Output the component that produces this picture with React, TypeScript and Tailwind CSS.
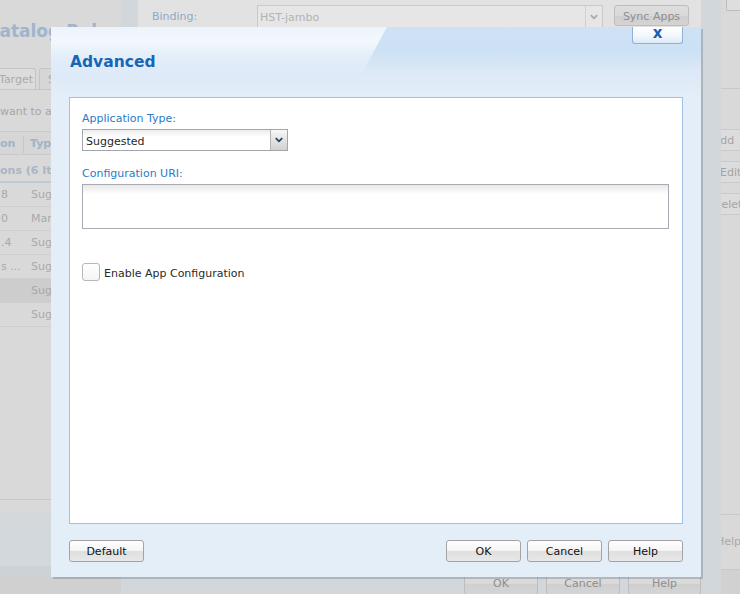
import React from 'react';

const font = "font-['DejaVu_Sans',Verdana,sans-serif]";

const btn =
  'flex items-center justify-center rounded-[3px] border border-[#a3a3a3] bg-[linear-gradient(180deg,#ffffff_0%,#f4f4f4_50%,#dfdfdf_52%,#e8e8e8_100%)] pt-[3px] text-[11px] text-[#111]';

const bgBtn =
  'flex items-center justify-center rounded-[3px] border border-[#bdbdbd] bg-[linear-gradient(180deg,#dedede_0%,#d9d9d9_50%,#cfcfcf_52%,#d4d4d4_100%)] text-[11px] text-[#8e8e8e]';

const rows = [
  { a: '8', b: 'Suggested' },
  { a: '0', b: 'Manual' },
  { a: '.4', b: 'Suggested' },
  { a: 's ...', b: 'Suggested' },
  { a: '', b: 'Suggested', selected: true },
  { a: '', b: 'Suggested' },
];

function Chevron({ className }: { className?: string }) {
  return (
    <svg viewBox="0 0 10 7" className={className}>
      <path d="M1 1.2 L5 5.2 L9 1.2" fill="none" stroke="currentColor" strokeWidth="2.2" />
    </svg>
  );
}

export default function App() {
  return (
    <div className={`relative h-[594px] w-[740px] overflow-hidden bg-[#d2d7dc] ${font}`}>
      <div className="flex h-full">
        {/* left catalog panel (dimmed) */}
        <div className="flex h-full w-[121px] shrink-0 flex-col overflow-hidden bg-[#d9d9d9]">
          <div className="h-[20px]" />
          <div className="-ml-[13px] whitespace-nowrap text-[17px] font-bold leading-[22px] text-[#9fb5cc]">
            Catalog Rules
          </div>
          <div className="mt-[27px] flex h-[21px] items-end gap-[3px] border-b border-[#c6c6c6]">
            <div className="-ml-[4px] flex h-[21px] w-[40px] items-center justify-center rounded-t-[3px] border border-b-0 border-[#c4c4c4] bg-[#dcdcdc] pt-[2px] text-[11px] text-[#ababab]">
              Target
            </div>
            <div className="flex h-[21px] w-[60px] items-center rounded-t-[3px] border border-b-0 border-[#c4c4c4] bg-[#d6d6d6] pl-[8px] pt-[2px] text-[11px] text-[#ababab]">
              Source
            </div>
          </div>
          <div className="mt-[15px] whitespace-nowrap text-[11px] leading-[14px] text-[#a6a6a6]">
            want to add rules
          </div>
          <div className="mt-[12px] flex h-[24px] items-center border-y border-[#cacaca] bg-[#d6d6d6] pt-[3px] text-[11px] font-bold text-[#9fb3c8]">
            <div className="w-[24px] border-r border-[#c6c6c6]">on</div>
            <div className="pl-[6px]">Type</div>
          </div>
          <div className="flex h-[28px] shrink-0 items-center border-b-2 border-[#bccad8] pt-[6px] whitespace-nowrap text-[11px] font-bold text-[#a8b6c5]">
            ons (6 Items)
          </div>
          {rows.map((r, i) => (
            <div
              key={i}
              className={`flex h-[24px] shrink-0 items-center border-b border-[#cfcfcf] pt-[2px] text-[11px] text-[#a9a9a9] ${
                r.selected ? 'bg-[#cdcdcd]' : ''
              }`}
            >
              <div className="w-[31px] whitespace-nowrap pl-[1px]">{r.a}</div>
              <div className="whitespace-nowrap">{r.b}</div>
            </div>
          ))}
          <div className="flex-1" />
          <div className="h-[14px] border-t border-[#c8c8c8]" />
          <div className="h-[53px] bg-[#d3d8dd]" />
          <div className="h-[11px] bg-[#cdd2d7]" />
          <div className="h-[17px] bg-[#d0d0d0]" />
        </div>

        {/* main wizard area (dimmed) */}
        <div className="flex h-full w-[600px] shrink-0 flex-col pl-[17px] pr-[20px]">
          <div className="flex h-[566px] flex-col bg-[#e2e2e2]">
            <div className="flex h-[27px] items-start pt-[5px]">
              <div className="w-[119px] pl-[14px] pt-[5px] text-[11px] leading-[14px] text-[#8fa9c6]">Binding:</div>
              <div className="flex h-[23px] w-[346px] items-center border border-[#cacaca] bg-[#e6e6e6]">
                <span className="flex-1 pl-[2px] pt-[4px] text-[11px] text-[#b3b3b3]">HST-jambo</span>
                <div className="flex h-full w-[17px] items-center justify-center border-l border-[#d0d0d0] text-[#a9a9a9]">
                  <Chevron className="h-[6px] w-[8px]" />
                </div>
              </div>
              <div className={`ml-[11px] h-[21px] w-[75px] ${bgBtn} pt-[4px] text-[#6f6f6f]`}>Sync Apps</div>
            </div>
          </div>
          <div className="flex flex-1 items-end justify-end gap-[8px]">
            <div className={`h-[22px] w-[74px] ${bgBtn} translate-y-[1px]`}>OK</div>
            <div className={`h-[22px] w-[74px] ${bgBtn} translate-y-[1px]`}>Cancel</div>
            <div className={`h-[22px] w-[73px] ${bgBtn} translate-y-[1px]`}>Help</div>
          </div>
        </div>

        {/* right strip (dimmed) */}
        <div className="flex h-full w-[19px] shrink-0 flex-col overflow-hidden bg-[#d9d9d9]">
          <div className="ml-[5px] h-[11px] w-[30px] rounded-b-[2px] border border-t-0 border-[#bcbcbc] bg-[#dedede]" />
          <div className="h-[78px] border-b border-[#c9c9c9]" />
          <div className="h-[40px]" />
          <div className="flex h-[22px] items-center border-y border-[#cbcbcb] bg-[#dcdcdc] pt-[3px]">
            <span className="-ml-[8px] whitespace-nowrap text-[11px] text-[#a4a4a4]">Add</span>
          </div>
          <div className="h-[10px]" />
          <div className="flex h-[22px] items-center border-y border-[#cbcbcb] bg-[#dcdcdc] pt-[3px]">
            <span className="-ml-[1px] whitespace-nowrap text-[11px] text-[#a4a4a4]">Edit</span>
          </div>
          <div className="h-[10px]" />
          <div className="flex h-[22px] items-center border-y border-[#cbcbcb] bg-[#dcdcdc] pt-[3px]">
            <span className="-ml-[8px] whitespace-nowrap text-[11px] text-[#a4a4a4]">Delete</span>
          </div>
          <div className="flex-1" />
          <div className="flex h-[56px] items-center border-y border-[#c9c9c9]">
            <span className="-ml-[5px] whitespace-nowrap text-[11px] text-[#a9a9a9]">Help</span>
          </div>
          <div className="h-[24px] bg-[#d1d1d1]" />
        </div>
      </div>

      {/* Advanced dialog */}
      <div className="absolute left-[51px] top-[27px] flex h-[550px] w-[650px] flex-col bg-[#e4eef9] shadow-[2px_2px_0_rgba(80,90,100,0.28)]">
        <div className="relative h-[70px] shrink-0 bg-[linear-gradient(180deg,rgba(192,218,242,0.6)_0%,#cde1f4_35%,#dde9f7_65%,#e4eef9_100%)]">
          <div className="absolute left-0 top-0 h-[48px] w-[336px] bg-[linear-gradient(180deg,rgba(255,255,255,0.6)_0%,rgba(250,252,255,0.85)_30%,rgba(232,241,250,0)_100%)] [clip-path:polygon(0_0,336px_0,310px_48px,0_48px)]" />
          <div className="relative pl-[19px] pt-[25px] text-[15.5px] font-bold leading-[20px] text-[#1766b6]">
            Advanced
          </div>
          <div className="absolute right-[18px] top-0 flex h-[17px] w-[51px] items-center justify-center rounded-b-[3px] border border-t-0 border-[#8eb0d9] bg-[linear-gradient(180deg,#ffffff_0%,#f3f8fd_55%,#dde9f6_100%)] pb-[3px] text-[15px] font-bold leading-none text-[#1a5fb0]">
            x
          </div>
        </div>

        <div className="mx-[18px] h-[427px] shrink-0 border border-[#a2bfe5] bg-white pl-[12px] pt-[14px]">
          <div className="text-[11px] leading-[14px] text-[#2b7bc9]">Application Type:</div>
          <div className="mt-[3px] flex h-[22px] w-[206px] items-stretch border border-[#a3a6ad] bg-[linear-gradient(180deg,#ececec_0%,#ffffff_35%)]">
            <span className="flex flex-1 items-center pl-[3px] pt-[5px] text-[11px] text-[#1f1f1f]">Suggested</span>
            <div className="flex w-[17px] items-center justify-center border-l border-[#b3b3b3] bg-[linear-gradient(180deg,#f8f8f8_0%,#e3e3e3_50%,#d2d2d2_100%)] text-[#253f68]">
              <Chevron className="h-[6px] w-[8px]" />
            </div>
          </div>
          <div className="mt-[16px] text-[11px] leading-[14px] text-[#2b7bc9]">Configuration URI:</div>
          <div className="mt-[3px] h-[45px] w-[587px] border border-[#a9abb2] bg-[linear-gradient(180deg,#e9e9e9_0%,#ffffff_22%)]" />
          <div className="mt-[33px] flex items-center gap-[4px]">
            <div className="h-[18px] w-[18px] rounded-[3px] border border-[#b7b7b7] bg-[linear-gradient(180deg,#ffffff_0%,#f4f4f4_100%)]" />
            <span className="pt-[5px] text-[11px] leading-[14px] text-[#2a2a2a]">Enable App Configuration</span>
          </div>
        </div>

        <div className="flex items-center justify-between px-[18px] pt-[16px]">
          <div className={`h-[22px] w-[75px] ${btn}`}>Default</div>
          <div className="flex gap-[6px]">
            <div className={`h-[22px] w-[75px] ${btn}`}>OK</div>
            <div className={`h-[22px] w-[75px] ${btn}`}>Cancel</div>
            <div className={`h-[22px] w-[75px] ${btn}`}>Help</div>
          </div>
        </div>
      </div>
    </div>
  );
}
